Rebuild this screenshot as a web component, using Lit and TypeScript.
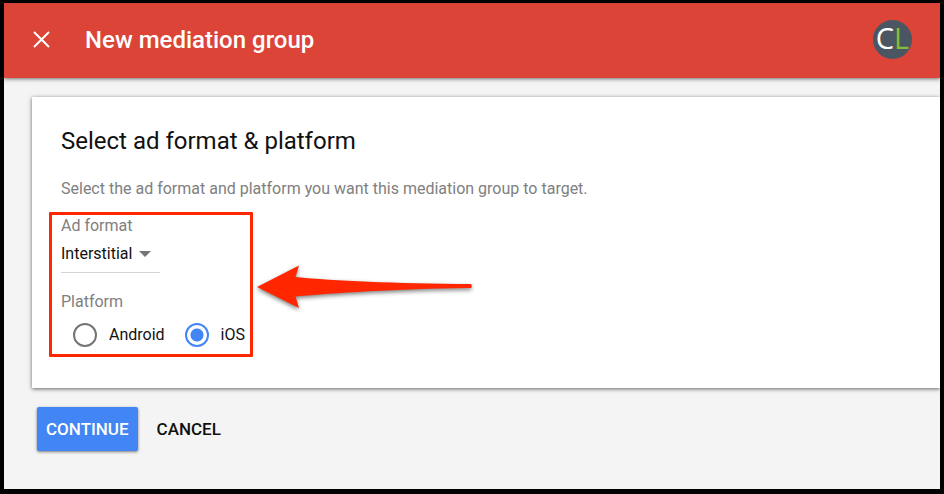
import { LitElement, html, css } from "lit";
import { customElement, state } from "lit/decorators.js";

@customElement("app-root")
export class AppRoot extends LitElement {
  @state() private platform = "ios";

  static styles = css`
    :host {
      display: block;
      font-family: Roboto, "Liberation Sans", sans-serif;
      color: #111;
    }
    * {
      box-sizing: border-box;
    }
    .shell {
      display: flex;
      flex-direction: column;
      min-height: 100vh;
      border: 4px solid #000;
      border-top-width: 3px;
      border-bottom-width: 5px;
      background: #f4f4f4;
      overflow: hidden;
    }
    .bar {
      display: flex;
      align-items: center;
      height: 75px;
      padding: 0 28px 2px;
      background: #db4437;
      color: #fff;
      box-shadow: 0 1px 4px rgba(0, 0, 0, 0.55);
    }
    button {
      font: inherit;
      border: 0;
      cursor: pointer;
    }
    .close {
      display: flex;
      padding: 0;
      background: none;
      color: inherit;
    }
    .title {
      flex: 1;
      margin: 0 0 0 34px;
      font-size: 24px;
      font-weight: 500;
      line-height: 32px;
    }
    .avatar {
      display: flex;
      align-items: center;
      justify-content: center;
      width: 39px;
      height: 39px;
      padding-bottom: 3px;
      border-radius: 50%;
      background: #4a5763;
      font-family: "Open Sans", sans-serif;
      font-size: 29px;
      line-height: 36px;
    }
    .avatar b {
      font-weight: 400;
      color: #84bd3a;
    }
    .card {
      margin: 19px 0 0 28px;
      padding: 28px 29px 31px;
      background: #fff;
      box-shadow: 0 1px 4px rgba(0, 0, 0, 0.6);
    }
    h2 {
      margin: 0;
      font-size: 24px;
      font-weight: 400;
      line-height: 32px;
    }
    .hint {
      margin: 20px 0 11px;
      font-size: 16px;
      line-height: 24px;
      color: #808080;
    }
    .target {
      display: flex;
      align-items: center;
      gap: 4px;
      margin-left: -12px;
    }
    .marked {
      width: 204px;
      height: 145px;
      padding: 1px 0 0 9px;
      border: 3px solid #ff2600;
      border-radius: 1px;
    }
    .label {
      display: block;
      padding: 0;
      font-size: 16px;
      line-height: 20px;
      color: #808080;
    }
    .picker {
      display: flex;
      align-items: center;
      width: 99px;
      height: 37px;
      border-bottom: 1px solid #d4d4d4;
    }
    select {
      appearance: none;
      width: 78px;
      padding: 0;
      border: 0;
      background: none;
      font: inherit;
      font-size: 16px;
      line-height: 20px;
      color: #111;
    }
    .caret {
      pointer-events: none;
    }
    fieldset {
      margin: 19px 0 0;
      padding: 0;
      border: 0;
      min-width: 0;
    }
    .options {
      display: flex;
      gap: 20px;
      padding: 11px 0 0 12px;
    }
    .option {
      display: flex;
      align-items: center;
      gap: 12px;
      font-size: 16px;
      line-height: 24px;
      white-space: nowrap;
    }
    input {
      appearance: none;
      flex: none;
      width: 24px;
      height: 24px;
      margin: 0;
      border: 2px solid #757575;
      border-radius: 50%;
    }
    input:checked {
      border-color: #4285f4;
      background: radial-gradient(circle, #4285f4 6px, transparent 7px);
    }
    .arrow {
      flex: none;
      overflow: visible;
      filter: drop-shadow(0 2px 2px rgba(0, 0, 0, 0.5));
    }
    .actions {
      display: flex;
      gap: 10px;
      padding: 19px 33px;
      font-size: 17px;
      font-weight: 500;
    }
    .action {
      height: 44px;
      padding: 0 9px;
      border-radius: 2px;
      background: none;
      color: #111;
    }
    .primary {
      background: #4285f4;
      color: #fff;
      box-shadow: 0 1px 3px rgba(0, 0, 0, 0.5);
    }
  `;

  private option(value: string, text: string) {
    return html`<label class="option">
      <input
        type="radio"
        name="platform"
        .value=${value}
        .checked=${this.platform === value}
        @change=${() => (this.platform = value)}
      />${text}
    </label>`;
  }

  render() {
    return html`
      <div class="shell">
        <header class="bar">
          <button class="close" aria-label="Close">
            <svg width="19" height="18" viewBox="0 0 19 18" fill="none" stroke="currentColor" stroke-width="2">
              <path d="M2 1 17 16M17 1 2 16" />
            </svg>
          </button>
          <h1 class="title">New mediation group</h1>
          <div class="avatar">C<b>L</b></div>
        </header>
        <main>
          <section class="card">
            <h2>Select ad format &amp; platform</h2>
            <p class="hint">Select the ad format and platform you want this mediation group to target.</p>
            <div class="target">
              <div class="marked">
                <label class="label" for="format">Ad format</label>
                <div class="picker">
                  <select id="format">
                    <option>Interstitial</option>
                  </select>
                  <svg class="caret" width="12" height="6" viewBox="0 0 12 6"><path d="M0 0h12L6 6z" fill="#757575" /></svg>
                </div>
                <fieldset>
                  <legend class="label">Platform</legend>
                  <div class="options">
                    ${this.option("android", "Android")} ${this.option("ios", "iOS")}
                  </div>
                </fieldset>
              </div>
              <svg class="arrow" width="216" height="44" viewBox="0 0 216 44" aria-hidden="true">
                <path d="M0 24 42 2.500 38.500 14C78 18 136 20.500 214 21Q215.500 22.800 214 25C136 26 78 30 38.500 33.500L42 45Z" fill="#ff2600" />
              </svg>
            </div>
          </section>
          <div class="actions">
            <button class="action primary">CONTINUE</button>
            <button class="action">CANCEL</button>
          </div>
        </main>
      </div>
    `;
  }
}
